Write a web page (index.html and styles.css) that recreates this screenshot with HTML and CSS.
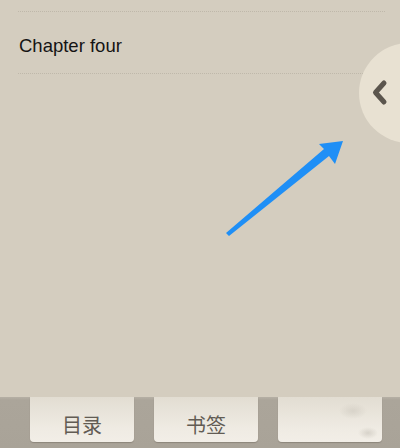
FILE: index.html
```html
<!DOCTYPE html>
<html>
<head>
<meta charset="utf-8">
<link rel="stylesheet" href="styles.css">
</head>
<body>
<div class="page">
  <main class="content">
    <div class="list">
      <div class="row">Chapter four</div>
    </div>
    <div class="handle">
      <svg class="chev" width="20" height="30" viewBox="0 0 20 30">
        <path d="M13 5 L4.5 14.5 L13 24" fill="none" stroke="#5b554d" stroke-width="5" stroke-linecap="round" stroke-linejoin="round"/>
      </svg>
    </div>
    <svg class="arrow" width="400" height="448" viewBox="0 0 400 448">
      <polygon points="226,233 324,149 319,144 343,141 335,164 329,156 229,236" fill="#1f8ff6"/>
    </svg>
  </main>
  <footer class="bar">
    <div class="tab">目录</div>
    <div class="tab">书签</div>
    <div class="tab tab-art"></div>
  </footer>
</div>
</body>
</html>
```
FILE: styles.css
```css
html, body {
  margin: 0;
  padding: 0;
}
body {
  background: #d4cdbf;
  font-family: "Liberation Sans", Arial, sans-serif;
}
.page {
  width: 400px;
  height: 448px;
  display: flex;
  flex-direction: column;
  overflow: hidden;
  position: relative;
}
.content {
  flex: 1;
  position: relative;
}
.list {
  margin: 11px 15px 0 18px;
}
.row {
  height: 61px;
  box-sizing: border-box;
  border-top: 1px dotted #bfb8aa;
  border-bottom: 1px dotted #bfb8aa;
  display: flex;
  align-items: center;
  padding: 6px 0 0 1px;
  height: 63px;
  font-size: 18.5px;
  color: #141414;
}
.handle {
  position: absolute;
  left: 359px;
  top: 43px;
  width: 100px;
  height: 100px;
  border-radius: 50%;
  background: #e8e1d2;
}
.chev {
  position: absolute;
  left: 12px;
  top: 35px;
}
.arrow {
  position: absolute;
  left: 0;
  top: 0;
}
.bar {
  height: 51px;
  background: linear-gradient(#b6b0a5 0, #aba59a 3px, #a9a398 100%);
  display: flex;
  gap: 20px;
  padding-left: 30px;
  align-items: flex-start;
}
.tab {
  width: 104px;
  height: 45px;
  box-sizing: border-box;
  background: linear-gradient(#e2ddd2, #efebe3 70%, #f2eee7);
  border-radius: 0 0 4px 4px;
  box-shadow: 0 1px 1px rgba(90, 80, 70, 0.35);
  display: flex;
  justify-content: center;
  align-items: center;
  padding-top: 9px;
  font-family: "Noto Sans CJK SC", sans-serif;
  font-size: 20px;
  color: #625c54;
}
.tab-art {
  background:
    radial-gradient(ellipse 14px 8px at 75px 14px, rgba(200, 195, 185, 0.5), transparent),
    radial-gradient(ellipse 10px 6px at 90px 36px, rgba(190, 185, 175, 0.5), transparent),
    linear-gradient(#e2ddd2, #efebe3 70%, #f2eee7);
}
```
